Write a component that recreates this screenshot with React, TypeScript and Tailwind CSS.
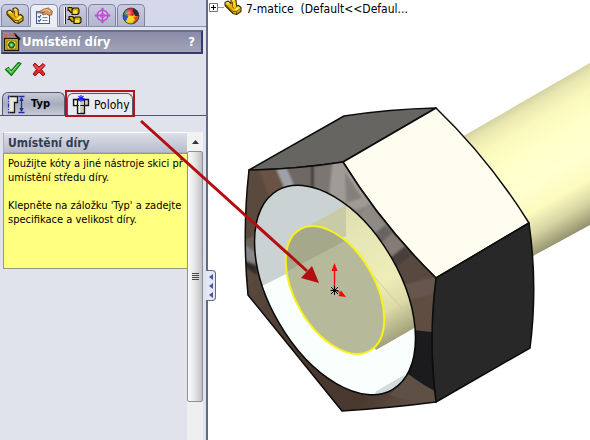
import type {ReactNode} from "react";

interface PanelTabProps {
    label: string
    active?: boolean
    children: ReactNode
}

function PanelTab(props: PanelTabProps) {
    return (
        <button type="button" aria-label={props.label}
                className={props.active
                    ? "relative -mb-px flex h-[23px] w-7 items-center justify-center rounded-t-[5px] border border-b-0 border-[#8b8fa9] bg-[#eceef6]"
                    : "flex h-[22px] w-7 items-center justify-center rounded-t-[5px] border border-b-0 border-[#8084a0] bg-linear-to-b from-[#c9cce0] to-[#b2b6cc]"}>
            {props.children}
        </button>
    )
}

function PartIcon() {
    return (
        <svg viewBox="0 0 18 17" className="h-[17px] w-[18px]" aria-hidden="true">
            <path d="M1 4.500 4 3 7 5.500 7 1.500 10 0.800 12 2.500 12.500 8 14.500 7.500 17 9.500V13.500L12.500 16.500 9 15.500 1 7.500Z"
                  fill="#e6b400" stroke="#3a2c00" strokeWidth="1.100" strokeLinejoin="round"/>
            <path d="M7.500 2 9.800 1.500 11.300 3 9 3.600ZM1.800 4.800 4 3.800 6 5.500 4 6.500Z" fill="#ffe768"/>
            <path d="M9.200 4 11.300 3.500 11.700 8.500 9.800 10 8.800 8.500Z" fill="#ffd21f"/>
            <path d="M10 12 14.300 8.800 16.200 10 12.500 12.800Z" fill="#ffee66"/>
            <path d="M1.500 6.500 9 13.500 12.500 13.500V16M12.500 13.500 16.500 10.500M8.500 4V8.500L10 10.500" fill="none"
                  stroke="#5c4500" strokeWidth="0.800"/>
        </svg>
    )
}

function PropertyIcon() {
    return (
        <svg viewBox="0 0 18 18" className="size-[18px]" aria-hidden="true">
            <rect x="1.500" y="4.500" width="13" height="12" fill="#f7f8fd" stroke="#50587c"/>
            <path d="M2 5.500h6" stroke="#8b93b6" strokeWidth="2"/>
            <path d="m3 9 1.200 1.500L6 8M3 13l1.200 1.500L6 12" fill="none" stroke="#2f4f9c" strokeWidth="1.200"/>
            <path d="M7.500 10.500h5M7.500 13.500h5" stroke="#777f9c"/>
            <path d="M4.500 4.500 9 2 13.500 1 17.500 4.500 16.500 8 14 8.500 11.500 7 8 8 7 6.500 9.500 5 5.500 6Z"
                  fill="#d8985c" stroke="#7a4a22" strokeWidth="0.700"/>
            <path d="M8 3.500 12 2.500 15 4.500" fill="none" stroke="#f5cda4"/>
        </svg>
    )
}

function ConfigurationIcon() {
    return (
        <svg viewBox="0 0 20 19" className="h-[19px] w-5" aria-hidden="true">
            <path d="M4.500 4.500H9M4.500 13.500H10" stroke="#111" strokeWidth="1.200"/>
            <path d="M1.500 1v17" stroke="#fff" strokeWidth="1"/>
            <path d="M2.500 1v17" stroke="#222" strokeWidth="1"/>
            <g stroke="#1c1700" strokeWidth="1.100" fill="#dcae00" strokeLinejoin="round">
                <path d="M5 1.500H8.500L10.500 3.500V6L8 6.500 5 3.500Z"/>
                <path d="M9 3.500 10.500 2H15L16 3.500V7L14.500 8.500H9Z"/>
                <path d="M6 10.500H9.500L11.500 12.500V16L9 15.500 6 12.500Z"/>
                <path d="M11 12.500 12.500 11H17L18 12.500V16L16.500 17.500H11Z"/>
            </g>
            <path d="M10.200 4.800H14V7.500H10.200ZM12.200 13.800H16V16.500H12.200Z" fill="#ffe84a"/>
        </svg>
    )
}

function TargetIcon() {
    return (
        <svg viewBox="0 0 17 17" className="size-[17px]" fill="none" stroke="#c24bd6" aria-hidden="true">
            <circle cx="8.500" cy="8.500" r="5.300" strokeWidth="1.500"/>
            <circle cx="8.500" cy="8.500" r="2" strokeWidth="1"/>
            <path d="M8.500 1v15M1 8.500h15" strokeWidth="1.300"/>
            <path d="m6.500 2.500 2-2 2 2ZM6.500 14.500l2 2 2-2ZM2.500 6.500l-2 2 2 2ZM14.500 6.500l2 2-2 2Z" fill="#c24bd6"
                  stroke="none"/>
        </svg>
    )
}

function AppearanceIcon() {
    return (
        <svg viewBox="0 0 18 18" className="size-[18px]" aria-hidden="true">
            <defs>
                <clipPath id="ball"><circle cx="9" cy="9" r="8"/></clipPath>
                <radialGradient id="shine" cx="0.35" cy="0.3" r="0.75">
                    <stop offset="0" stopColor="#fff" stopOpacity="0.5"/>
                    <stop offset="0.35" stopColor="#fff" stopOpacity="0"/>
                    <stop offset="1" stopColor="#000" stopOpacity="0.15"/>
                </radialGradient>
            </defs>
            <g clipPath="url(#ball)">
                <path d="M0 0h18v18H0Z" fill="#f3cc12"/>
                <path d="M0 0H5L6 5 0 10Z" fill="#2f9c3c"/>
                <path d="M4 0H12L14 5 11 9 5 8Z" fill="#e3241b"/>
                <path d="M11 0H18V10L13 9 11 4Z" fill="#1c2440"/>
                <path d="M0 8 5 7 7 11 4 16H0Z" fill="#2456c8"/>
                <path d="M11 10 18 9V18H9Z" fill="#e8451c"/>
                <path d="M6 10 11 9 13 13 9 18 3 16Z" fill="#ffd91f"/>
            </g>
            <circle cx="9" cy="9" r="8" fill="url(#shine)" stroke="#3b3550" strokeWidth="0.800"/>
        </svg>
    )
}

function HoleWizardIcon() {
    return (
        <svg viewBox="0 0 18 20" className="h-5 w-[18px]" aria-hidden="true">
            <rect x="1.500" y="6.500" width="14" height="12" fill="#e3c40f" stroke="#1d1a00" strokeWidth="1.300"/>
            <rect x="4" y="9" width="9" height="8" fill="#ffef60" stroke="#5e5300" strokeWidth="0.800"/>
            <circle cx="8.500" cy="13" r="3" fill="#3fa338" stroke="#133d12"/>
            <circle cx="8.500" cy="13" r="1.200" fill="#a0e28a"/>
            <path d="M11 1.500 17 7.500" stroke="#111" strokeWidth="1.800"/>
            <path d="M1 2 4 5M4 2 2 5M7 1.500v3M5.500 3h4M10 4 12 2" stroke="#e0602c" strokeWidth="1.100"/>
        </svg>
    )
}

function OkIcon() {
    return (
        <svg viewBox="0 0 18 16" className="h-4 w-[18px]" aria-hidden="true">
            <path d="M1.500 8.500 4.500 6.500 7 10 14.500 1.500 17 2.500 7.500 14.500Z" fill="#35c12c" stroke="#14701a"
                  strokeWidth="1.200" strokeLinejoin="round"/>
            <path d="M3 8.500 4.500 7.700 7 11.500 14.800 2.800" fill="none" stroke="#8ff07c"/>
        </svg>
    )
}

function CancelIcon() {
    return (
        <svg viewBox="0 0 14 15" className="h-[15px] w-3.5" aria-hidden="true">
            <path d="M1 3 3 1 7 5 11 1.500 13 3.500 9.500 7.500 13 12 11 14 7 10 3 14 1 12 4.500 7.500Z" fill="#dc2a2a"
                  stroke="#9c1212" strokeLinejoin="round"/>
            <path d="M2.500 3 7 7.500 11 3.500" fill="none" stroke="#f47b74"/>
        </svg>
    )
}

function TypeIcon() {
    return (
        <svg viewBox="0 0 18 19" className="h-[19px] w-[18px]" aria-hidden="true">
            <path d="M2.500 1.500H10.500V7.500H7.500V17.500H2.500Z" fill="#e9e9d8"/>
            <path d="M2.500 1.500H10.500V7.500H7.500V17.500H2.500" fill="none" stroke="#1a1a1a" strokeWidth="1.300"/>
            <path d="M1.500 0.500v18" stroke="#2432a8" strokeDasharray="4 1.500 1 1.500" strokeWidth="1.200"/>
            <path d="M11.500 1.500h6M11.500 17.500h6M14.500 3v13" stroke="#1c2ea6" strokeWidth="1.300"/>
            <path d="m12.300 6 2.200-4 2.200 4ZM12.300 13l2.200 4 2.200-4Z" fill="#1c2ea6"/>
        </svg>
    )
}

function PositionIcon() {
    return (
        <svg viewBox="0 0 18 20" className="h-5 w-[18px]" aria-hidden="true">
            <path d="M1.500 4.500h15v6h-4v8h-7v-8h-4Z" fill="#c9cabb" stroke="#161616" strokeWidth="1.300"/>
            <path d="M5.500 10.500h7M5.500 5v5M12.500 5v5" stroke="#161616"/>
            <path d="M7.500 6v12M3.500 6v4" stroke="#f4f4ea" strokeWidth="1.500"/>
            <path d="M9 0v7M5.500 3.500h7M6.500 1l5 5M11.500 1l-5 5" stroke="#2020f0" strokeWidth="1.100"/>
        </svg>
    )
}

function PropertyPanel() {
    return (
        <aside
            className="flex w-[208px] shrink-0 flex-col border-r-2 border-[#646986] bg-[#e0e3ec] text-[12px] text-black">

            <div className="flex items-end gap-px border-b border-[#8b8fa9] bg-[#d5d8eb] pt-1 pl-px">
                <PanelTab label="FeatureManager"><PartIcon/></PanelTab>
                <PanelTab label="PropertyManager" active><PropertyIcon/></PanelTab>
                <PanelTab label="ConfigurationManager"><ConfigurationIcon/></PanelTab>
                <PanelTab label="DimXpertManager"><TargetIcon/></PanelTab>
                <PanelTab label="DisplayManager"><AppearanceIcon/></PanelTab>
            </div>

            <div
                className="mt-[3px] mr-[3px] ml-px flex h-6 items-center border-2 border-t-[#696d90] border-r-[#373b68] border-b-[#373b68] border-l-[#696d90] bg-linear-to-b from-[#898ca8] to-[#a2a4ba] text-white">
                <HoleWizardIcon/>
                <h1 className="ml-px flex-1 text-[13px] leading-5 font-bold">Umístění díry</h1>
                <button type="button" className="mr-1.5 text-[13px] leading-5 font-bold">?</button>
            </div>

            <div className="mt-1.5 flex h-[18px] items-center gap-2.5 pl-1">
                <button type="button" aria-label="OK"><OkIcon/></button>
                <button type="button" aria-label="Zrušit"><CancelIcon/></button>
            </div>

            <div className="mt-3 flex h-[26px] items-end border-b border-[#50546c]">
                <button type="button"
                        className="ml-0.5 flex h-[23px] w-[63px] items-center gap-1.5 rounded-t-md border border-b-0 border-[#555970] bg-linear-to-b from-[#c9cbd7] via-[#a9acbe] to-[#c7c9d6] pl-1 text-[11px] font-bold">
                    <TypeIcon/>Typ
                </button>
                <button type="button"
                        className="relative -mb-0.5 flex h-[27px] w-[70px] items-end border-2 border-[#b0161c]">
                    <span
                        className="flex h-[22px] w-full items-center gap-1 rounded-t-md border border-b-0 border-[#555970] bg-[#e9ebf2] pl-1">
                        <PositionIcon/>Polohy
                    </span>
                </button>
            </div>

            <div className="mt-4 mr-[3px] flex min-h-0 flex-1">
                <section className="ml-[3px] min-w-0 flex-1">
                    <h2 className="h-[21px] border border-r-0 border-[#a9adbf] border-t-white bg-linear-to-b from-[#dcdfe8] to-[#b9bdcc] pl-1 text-[12px] leading-5 font-bold text-[#343c50]">
                        Umístění díry
                    </h2>
                    <div
                        className="h-[116px] border border-r-0 border-[#96987f] bg-[#ffff80] pt-[3px] pl-1 text-[11px] leading-[14px] whitespace-nowrap">
                        <p>Použijte kóty a jiné nástroje skici př<br/>umístění středu díry.</p>
                        <p className="mt-3.5">Klepněte na záložku 'Typ' a zadejte<br/>specifikace a velikost díry.</p>
                    </div>
                </section>

                <div className="flex w-4 flex-col bg-[#efeff0]">
                    <button type="button" aria-label="Nahoru"
                            className="flex h-[19px] items-center justify-center bg-[#f2f2f3]">
                        <svg viewBox="0 0 7 4" className="h-1 w-[7px]" aria-hidden="true">
                            <path d="M0 4 3.500 0 7 4Z" fill="#333"/>
                        </svg>
                    </button>
                    <div
                        className="flex h-[251px] flex-col items-center justify-center gap-px rounded-xs border border-[#8f9094] bg-linear-to-r from-[#fafafa] via-[#e5e5e7] to-[#bfc0c4]">
                        <span className="h-px w-[7px] bg-[#444]"/>
                        <span className="h-px w-[7px] bg-[#444]"/>
                        <span className="h-px w-[7px] bg-[#444]"/>
                        <span className="h-px w-[7px] bg-[#444]"/>
                    </div>
                </div>
            </div>
        </aside>
    )
}

// front chamfer outline, reused for fill, clip and stroke
const frontFace = "M249 170Q298 169 343 162Q382 225 436 278Q428 340 436 402Q390 408 342 411L248 295Q242 232 249 170Z"

function NutModel() {
    return (
        <svg viewBox="208 20 382 420" className="block w-full" role="img" aria-label="7-matice">
            <defs>
                <linearGradient id="shaft" gradientUnits="userSpaceOnUse" x1="525" y1="100" x2="595" y2="221">
                    <stop offset="0" stopColor="#d3d1a0"/>
                    <stop offset="0.06" stopColor="#e9e7b0"/>
                    <stop offset="0.18" stopColor="#fbf9bd"/>
                    <stop offset="0.35" stopColor="#ffffc8"/>
                    <stop offset="0.55" stopColor="#ffffd0"/>
                    <stop offset="0.72" stopColor="#fdfbbf"/>
                    <stop offset="0.86" stopColor="#d8d5a4"/>
                    <stop offset="1" stopColor="#96946f"/>
                </linearGradient>
                <linearGradient id="inner" gradientUnits="userSpaceOnUse" x1="345" y1="205" x2="415" y2="327">
                    <stop offset="0" stopColor="#dcddac"/>
                    <stop offset="0.2" stopColor="#e4e5b6"/>
                    <stop offset="0.6" stopColor="#eeedb8"/>
                    <stop offset="0.8" stopColor="#dcdaa6"/>
                    <stop offset="1" stopColor="#a3a27c"/>
                </linearGradient>
                <linearGradient id="chamfer" gradientUnits="userSpaceOnUse" x1="250" y1="170" x2="436" y2="300">
                    <stop offset="0" stopColor="#57483f"/>
                    <stop offset="0.12" stopColor="#6e6057"/>
                    <stop offset="0.3" stopColor="#6b6561"/>
                    <stop offset="0.5" stopColor="#8b8580"/>
                    <stop offset="0.7" stopColor="#6c655f"/>
                    <stop offset="0.85" stopColor="#4c3e37"/>
                    <stop offset="1" stopColor="#5b4a41"/>
                </linearGradient>
                <linearGradient id="lower" gradientUnits="userSpaceOnUse" x1="245" y1="290" x2="436" y2="405">
                    <stop offset="0" stopColor="#5a483d"/>
                    <stop offset="0.35" stopColor="#493a31"/>
                    <stop offset="0.7" stopColor="#4a382e"/>
                    <stop offset="1" stopColor="#6a5a4e"/>
                </linearGradient>
                <filter id="soften" x="-5%" y="-5%" width="110%" height="110%">
                    <feGaussianBlur stdDeviation="1.200"/>
                </filter>
                <clipPath id="front"><path d={frontFace}/></clipPath>
                <clipPath id="bore">
                    <ellipse cx="335" cy="290" rx="115" ry="65" transform="rotate(60 335 290)"/>
                </clipPath>
                <clipPath id="sketch">
                    <ellipse cx="335" cy="290" rx="70" ry="40" transform="rotate(60 335 290)"/>
                </clipPath>
            </defs>

            <path d="M460 138 590 63V225L533 256Z" fill="url(#shaft)"/>

            <g stroke="#0c0c0c" strokeWidth="1.500" strokeLinejoin="round">
                <path d="M249 170 344 116Q390 109 436 108L343 162Q298 169 249 170Z" fill="#666562"/>
                <path d="M343 162 436 108Q489 159 529 223L436 278Q382 225 343 162Z" fill="#fffdf0"/>
                <path d="M436 278 529 223Q538 286 530 348L436 402Q428 340 436 278Z" fill="#282828"/>
            </g>

            <path d={frontFace} fill="url(#chamfer)"/>
            {/* metal reflections around the chamfer */}
            <g clipPath="url(#front)">
                <g filter="url(#soften)">
                    <path d="M236 250 335 290 440 330V420H236Z" fill="url(#lower)"/>
                    <path d="M244 165 258 169 272 200 256 235 244 240Z" fill="#5a483e"/>
                    <path d="M258 166 275 166 286 192 270 200Z" fill="#6b5344"/>
                    <path d="M275 166 285 165 297 190 286 192Z" fill="#a0a2a8"/>
                    <path d="M285 164H311V188L296 190Z" fill="#6e6762"/>
                    <path d="M311 160H314V190H311Z" fill="#3f3b39"/>
                    <path d="M314 160 334 158 330 195 314 190Z" fill="#7b7673"/>
                    <path d="M333 158 345 158 372 204 356 210 329 195Z" fill="#a09b96"/>
                    <path d="M345 172 362 198 346 203Z" fill="#86807a"/>
                    <path d="M368 203 387 226 374 233 360 216Z" fill="#8e8a86"/>
                    <path d="M385 225 394 235 381 243 374 234Z" fill="#686460"/>
                    <path d="M392 233 407 247 391 259 381 243Z" fill="#847b75"/>
                    <path d="M405 246 416 256 396 269 390 258Z" fill="#4a403b"/>
                    <path d="M413 254 440 278 436 292 404 294 394 269Z" fill="#594940"/>
                    <path d="M402 285 440 276V294L408 300Z" fill="#66564d"/>
                    <path d="M407 300 440 296V332H412Z" fill="#614d42"/>
                    <path d="M243 244 256 252V264L243 260Z" fill="#86858a"/>
                    <path d="M243 260 257 267V275L243 266Z" fill="#2d292b"/>
                </g>
                <path d="M413 330 440 333V394L404 374Z" fill="#1b1b1d"/>
                <path d="M408 374 440 396V408L390 395Z" fill="#5f5045"/>
            </g>
            <path d={frontFace} fill="none" stroke="#0c0c0c" strokeWidth="1.500" strokeLinejoin="round"/>

            <g clipPath="url(#bore)">
                <path d="M240 170H430V410H240Z" fill="#f8fffd"/>
                <path d="M240 170H430V202L262 286 240 296Z" fill="#cbd2d3"/>
                <path d="M375 392 404 375 412 385 380 400Z" fill="#d4dbdc"/>
                <path d="M306 227 346 205 380 186 430 240V319L376 350Z" fill="url(#inner)"/>
                <path d="M306 227 346 205V236L313 252Z" fill="#c9cba6"/>
                <path d="M370 272 414 322" fill="none" stroke="#c8ca9a" strokeWidth="0.800"/>
            </g>
            <g clipPath="url(#sketch)">
                <path d="M280 220H390V360H280Z" fill="#b7b99b"/>
                <path d="M280 220H362L345 241 280 275Z" fill="#a5a88b"/>
            </g>
            <ellipse cx="335" cy="290" rx="70" ry="40" transform="rotate(60 335 290)" fill="none" stroke="#f7f21a"
                     strokeWidth="2"/>
            <ellipse cx="335" cy="290" rx="115" ry="65" transform="rotate(60 335 290)" fill="none" stroke="#080808"
                     strokeWidth="1.500"/>

            <g stroke="#f00" fill="#f00">
                <path d="M334.500 290V270M335 290 341 293" strokeWidth="1.300"/>
                <path d="M331.500 271 334.500 263 337.500 271ZM341 290.500 346 297 338.500 296Z" stroke="none"/>
            </g>
            <path d="M334.500 286v9M330.500 290.500h8M331 287l7 7M338 287l-7 7" stroke="#000"/>
        </svg>
    )
}

function Viewport() {
    return (
        <main className="relative min-w-0 flex-1 bg-white">
            <div className="flex h-5 items-start text-[12px] text-black">
                <button type="button" aria-label="Rozbalit" className="mt-[3px] ml-px">
                    <svg viewBox="0 0 15 9" className="h-[9px] w-[15px]" fill="none" stroke="#333" aria-hidden="true">
                        <path d="M.5.5h8v8h-8Z" stroke="#777"/>
                        <path d="M2 4.500h5M4.500 2v5" stroke="#000"/>
                        <path d="M9 4.500h6" stroke="#999"/>
                    </svg>
                </button>
                <div className="-mt-0.5"><PartIcon/></div>
                <span className="ml-1 pt-px leading-4 whitespace-pre">7-matice  (Default&lt;&lt;Defaul...</span>
            </div>
            <NutModel/>

            <button type="button" aria-label="Skrýt panel"
                    className="absolute top-[270px] -left-0.5 flex h-[31px] w-[10px] flex-col items-center justify-center gap-[3px] rounded-r-[4px] border border-l-0 border-[#646986] bg-[#e4e7f6]">
                <span className="size-0 border-y-3 border-r-4 border-y-transparent border-r-[#50549a]"/>
                <span className="size-0 border-y-3 border-r-4 border-y-transparent border-r-[#50549a]"/>
                <span className="size-0 border-y-3 border-r-4 border-y-transparent border-r-[#50549a]"/>
            </button>
        </main>
    )
}

export default function App() {
    return (
        <div
            className="relative flex min-h-screen overflow-hidden bg-white font-['DejaVu_Sans_Condensed','DejaVu_Sans',sans-serif]">
            <PropertyPanel/>
            <Viewport/>

            {/* callout arrow from the Polohy tab to the origin */}
            <svg viewBox="0 0 590 440" className="pointer-events-none absolute top-0 left-0 h-[440px] w-[590px]"
                 aria-hidden="true">
                <path d="M141 121 307 271" stroke="#b20d10" strokeWidth="3"/>
                <path d="M319 283 301 278 312 266Z" fill="#b20d10"/>
            </svg>
        </div>
    )
}
